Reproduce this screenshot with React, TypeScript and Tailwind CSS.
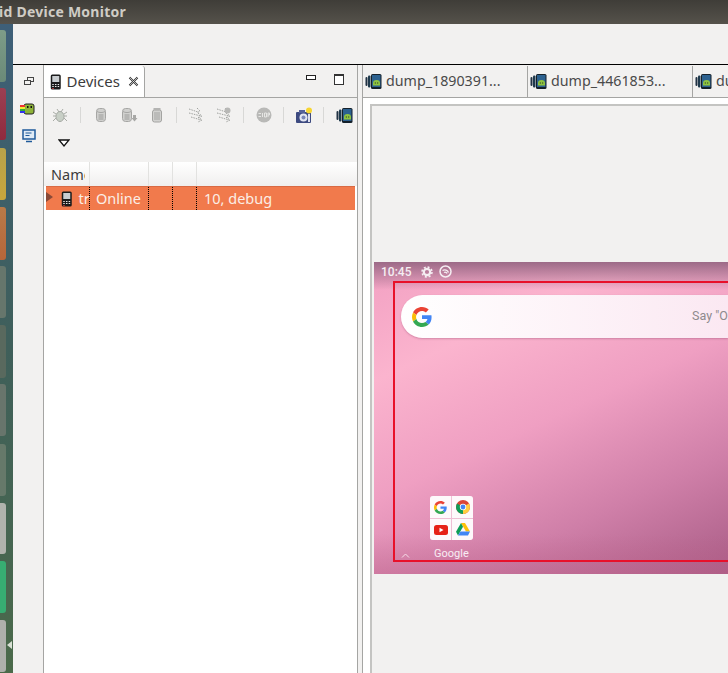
const ui = { fontFamily: '"Noto Sans", "Open Sans", sans-serif' };

function Phone({ size = 16 }: { size?: number }) {
  return (
    <svg width={size * 0.72} height={size} viewBox="0 0 11 16" className="shrink-0">
      <rect x="0.5" y="0.5" width="10" height="15" rx="1.5" fill="#1b1b1b" />
      <rect x="2" y="2" width="7" height="6" fill="#c9cdd0" />
      <g fill="#e8e8e8">
        <rect x="2" y="10" width="1.5" height="1" /><rect x="4.7" y="10" width="1.5" height="1" /><rect x="7.4" y="10" width="1.5" height="1" />
        <rect x="2" y="12" width="1.5" height="1" /><rect x="4.7" y="12" width="1.5" height="1" /><rect x="7.4" y="12" width="1.5" height="1" />
      </g>
      <g fill="#d43c3c"><rect x="2" y="14" width="1.5" height="1" /></g>
    </svg>
  );
}

function DumpIcon() {
  return (
    <svg width="17" height="17" viewBox="0 0 17 17" className="shrink-0">
      <rect x="0.5" y="4" width="2" height="9" rx="1" fill="#234" />
      <rect x="3" y="2.5" width="2.5" height="12" rx="1" fill="#1f3a4d" />
      <rect x="6" y="1" width="10.5" height="15" rx="1.5" fill="#14202a" />
      <rect x="7" y="2" width="8.5" height="12" fill="#2c618f" />
      <path d="M8 12.5v-2.5a3.5 3 0 0 1 7 0v2.5z" fill="#8fc43f" />
      <rect x="9.8" y="9.5" width="1" height="1" fill="#14202a" />
      <rect x="12.2" y="9.5" width="1" height="1" fill="#14202a" />
    </svg>
  );
}

function Bug() {
  return (
    <svg width="16" height="16" viewBox="0 0 16 16" className="shrink-0">
      <g stroke="#a9aca6" strokeWidth="1" fill="none">
        <path d="M5 2l2 3M11 2L9 5M1 5l3 2M15 5l-3 2M1 9h3M15 9h-3M1 14l3-3M15 14l-3-3" />
      </g>
      <ellipse cx="8" cy="9.5" rx="4" ry="5" fill="#c8cfc6" stroke="#a4a8a2" />
    </svg>
  );
}

function Can({ arrow = false }: { arrow?: boolean }) {
  return (
    <svg width={arrow ? 17 : 12} height="16" viewBox={arrow ? "0 0 17 16" : "0 0 12 16"} className="shrink-0">
      <rect x="1.5" y="1.5" width="9" height="13" rx="3" fill="#d0d0ce" stroke="#a6a6a4" />
      <path d="M2 4.5c2 1.4 6 1.4 8 0" stroke="#a6a6a4" fill="none" />
      <rect x="3.5" y="7" width="5" height="6" fill="#b6b6b4" />
      {arrow && <path d="M12 8h3v3h1.5l-3 3.500-3-3.500H12z" fill="#a8a8a6" />}
    </svg>
  );
}

function Trash() {
  return (
    <svg width="12" height="16" viewBox="0 0 12 16" className="shrink-0">
      <rect x="1.500" y="3" width="9" height="12" rx="2" fill="#d2d2d0" stroke="#a4a4a2" />
      <rect x="2.500" y="1" width="7" height="2" fill="#b4b4b2" />
      <path d="M4 5v8M6 5v8M8 5v8" stroke="#a4a4a2" />
    </svg>
  );
}

function Threads({ blob = false }: { blob?: boolean }) {
  return (
    <svg width="16" height="16" viewBox="0 0 16 16" className="shrink-0">
      <g stroke="#a0a29f" fill="none" strokeDasharray="1.500 1">
        <path d="M1 2l9 3M1 6l12 3M3 10l10 3" />
        <path d="M9 1l3 3-3 2M10 6l4 3-4 2M10 10l4 3-4 2" />
      </g>
      {blob && <circle cx="11.500" cy="3.500" r="3" fill="#b8b8b6" />}
    </svg>
  );
}

function Stop() {
  return (
    <svg width="16" height="16" viewBox="0 0 16 16" className="shrink-0">
      <circle cx="8" cy="8" r="7.500" fill="#b9b9b7" />
      <path d="M2.500 6.500h2.500M2.500 9.500h2.500M6.500 6v4M8.500 6h2v4h-2zM12 10V6h1.500v2H12" stroke="#e6e6e4" fill="none" strokeWidth="1" />
    </svg>
  );
}

function Camera() {
  return (
    <svg width="18" height="17" viewBox="0 0 18 17" className="shrink-0">
      <rect x="1" y="5" width="15" height="11" rx="1" fill="#3d4a80" />
      <rect x="4" y="3" width="6" height="3" fill="#56629a" />
      <circle cx="8.500" cy="10.500" r="4" fill="#e3e6f2" />
      <circle cx="8.500" cy="10.500" r="2" fill="#7a86b8" />
      <rect x="13" y="7" width="2" height="8" fill="#dfe2f0" />
      <circle cx="14" cy="3.500" r="3" fill="#f7d531" />
    </svg>
  );
}

function GoogleG({ size = 20 }: { size?: number }) {
  return (
    <svg width={size} height={size} viewBox="0 0 48 48" className="shrink-0">
      <path fill="#EA4335" d="M24 9.500c3.540 0 6.710 1.220 9.210 3.600l6.850-6.850C35.900 2.380 30.470 0 24 0 14.620 0 6.510 5.380 2.560 13.220l7.980 6.190C12.430 13.720 17.740 9.500 24 9.500z" />
      <path fill="#4285F4" d="M46.980 24.550c0-1.570-.15-3.090-.38-4.550H24v9.020h12.940c-.58 2.960-2.260 5.480-4.780 7.180l7.730 6c4.510-4.180 7.090-10.360 7.090-17.650z" />
      <path fill="#FBBC05" d="M10.530 28.590c-.48-1.450-.76-2.990-.76-4.590s.27-3.140.76-4.590l-7.980-6.190C.92 16.460 0 20.120 0 24c0 3.880.92 7.540 2.560 10.780l7.970-6.190z" />
      <path fill="#34A853" d="M24 48c6.480 0 11.930-2.130 15.890-5.810l-7.730-6c-2.150 1.450-4.920 2.300-8.160 2.300-6.260 0-11.570-4.220-13.470-9.910l-7.980 6.190C6.510 42.620 14.620 48 24 48z" />
    </svg>
  );
}

function Chrome() {
  return (
    <svg width="14" height="14" viewBox="0 0 14 14">
      <circle cx="7" cy="7" r="7" fill="#db4437" />
      <path d="M7 7L1 3.500A7 7 0 0 0 7 14z" fill="#0f9d58" />
      <path d="M7 7v7a7 7 0 0 0 6-10.500z" fill="#ffcd40" />
      <circle cx="7" cy="7" r="3.200" fill="#fff" />
      <circle cx="7" cy="7" r="2.400" fill="#4285f4" />
    </svg>
  );
}

function Youtube() {
  return (
    <svg width="14" height="10" viewBox="0 0 14 10">
      <rect width="14" height="10" rx="2.500" fill="#e62117" />
      <path d="M5.500 2.800L9.500 5l-4 2.200z" fill="#fff" />
    </svg>
  );
}

function Drive() {
  return (
    <svg width="14" height="13" viewBox="0 0 14 13">
      <path d="M5 0h4l5 8.500h-4z" fill="#ffc107" />
      <path d="M5 0l2 3.700-5 8.800-2-3.800z" fill="#0f9d58" />
      <path d="M4.500 8.500H14l-2 4H2z" fill="#4285f4" />
    </svg>
  );
}

const dock = [
  "h-[52px] mt-[6px] bg-gradient-to-b from-[#7d9c88] to-[#6a8a78]",
  "h-[52px] mt-[6px] bg-gradient-to-b from-[#9c3f52] to-[#8f2a3e]",
  "h-[52px] mt-[8px] bg-gradient-to-b from-[#b8a24a] to-[#c7a63c]",
  "h-[53px] mt-[7px] bg-gradient-to-b from-[#b97a48] to-[#b5663a]",
  "h-[52px] mt-[6px] bg-[#66766c]",
  "h-[53px] mt-[7px] bg-[#59695e]",
  "h-[52px] mt-[6px] bg-[#68756c]",
  "h-[52px] mt-[8px] bg-[#66796a]",
  "h-[51px] mt-[7px] bg-[#b0b3ad]",
  "h-[52px] mt-[7px] bg-[#37ad72]",
  "h-[52px] mt-[7px] bg-[#aeb0ab]",
];

function Sep() {
  return <div className="w-px h-[16px] bg-[#d8d8d6] shrink-0" />;
}

export default function App() {
  return (
    <div className="w-[728px] h-[673px] overflow-hidden flex flex-col bg-[#f2f1f0]" style={ui}>
      <div className="h-[24px] shrink-0 bg-gradient-to-b from-[#3f3d38] to-[#55524b] flex items-center overflow-hidden">
        <span className="text-[14px] font-bold text-[#cfccc5] leading-none tracking-[0.25px] ml-[-1px] mt-[-1px]">id Device Monitor</span>
      </div>
      <div className="flex-1 flex min-h-0">
        <div className="relative w-[13px] shrink-0 bg-gradient-to-b from-[#3e5f78] via-[#3f5f5a] to-[#4b6a4a] overflow-hidden">
          {dock.map((c, i) => (
            <div key={i} className={`w-[6px] rounded-r-[3px] ${c}`} />
          ))}
          <div className="absolute right-[1px] bottom-[24px] w-0 h-0 border-y-[4px] border-y-transparent border-r-[5px] border-r-[#d9e0d4]" />
        </div>
        <div className="flex-1 flex flex-col min-w-0">
          <div className="h-[41px] shrink-0 border-b border-black bg-[#f2f1f0]" />
          <div className="flex-1 flex min-h-0">
            {/* perspective bar */}
            <div className="w-[30px] shrink-0 flex flex-col items-center pt-[11px]">
              <svg width="10" height="10" viewBox="0 0 10 10" className="ml-[1px]">
                <rect x="3.500" y="1.500" width="6" height="4" fill="none" stroke="#444" />
                <rect x="0.500" y="4.500" width="6" height="4" fill="#f2f1f0" stroke="#444" />
              </svg>
              <svg width="16" height="12" viewBox="0 0 16 12" className="mt-[17px]">
                <rect x="4" y="1" width="10" height="10" rx="2" fill="#8fb339" stroke="#222" />
                <rect x="0" y="2" width="5" height="2" fill="#e33" /><rect x="0" y="4" width="5" height="2" fill="#ee3" />
                <rect x="0" y="6" width="5" height="2" fill="#3a3" /><rect x="0" y="8" width="5" height="2" fill="#33e" />
                <rect x="7" y="3" width="1.500" height="2" fill="#111" /><rect x="10.500" y="3" width="1.500" height="2" fill="#111" />
              </svg>
              <svg width="14" height="14" viewBox="0 0 14 14" className="mt-[14px] ml-px">
                <rect x="1" y="1" width="12" height="9" fill="#dfeaf5" stroke="#1f5a9a" strokeWidth="1.500" />
                <path d="M3.500 4h6M3.500 6.500h4" stroke="#1f5a9a" />
                <path d="M4 12.500h6" stroke="#1f5a9a" strokeWidth="1.500" />
              </svg>
            </div>
            {/* Devices view */}
            <div className="w-[315px] shrink-0 border-l border-r border-[#a5a5a3] flex flex-col">
              <div className="h-[32px] shrink-0 flex border-b border-[#a5a5a3] mt-px">
                <div className="w-[101px] h-[31px] bg-white rounded-tr-[3px] border-r border-[#a5a5a3] flex items-center pl-[6px] text-[15px] text-[#3c3c3c]">
                  <Phone />
                  <span className="ml-[5px] leading-none">Devices</span>
                  <svg width="11" height="11" viewBox="0 0 11 11" className="ml-[8px]">
                    <path d="M1.500 1.500l8 8M9.500 1.500l-8 8" stroke="#333" strokeWidth="2" />
                    <path d="M1.500 1.500l8 8M9.500 1.500l-8 8" stroke="#eee" strokeWidth="0.700" />
                  </svg>
                </div>
                <div className="flex-1 flex items-start justify-end pt-[8px] pr-[13px]">
                  <div className="w-[10px] h-[5px] border border-[#222] bg-white mr-[18px] mt-[1px]" />
                  <div className="w-[10px] h-[11px] border border-[#333] border-t-2 bg-white" />
                </div>
              </div>
              <div className="h-[64px] shrink-0 flex flex-col">
                <div className="h-[34px] flex items-center pl-[8px]">
                  <Bug />
                  <div className="w-[12px]" /><Sep /><div className="w-[14px]" />
                  <Can />
                  <div className="w-[14px]" />
                  <Can arrow />
                  <div className="w-[13px]" />
                  <Trash />
                  <div className="w-[13px]" /><Sep /><div className="w-[11px]" />
                  <Threads />
                  <div className="w-[12px]" />
                  <Threads blob />
                  <div className="w-[11px]" /><Sep /><div className="w-[12px]" />
                  <Stop />
                  <div className="w-[11px]" /><Sep /><div className="w-[11px]" />
                  <Camera />
                  <div className="w-[10px]" /><Sep /><div className="w-[12px]" />
                  <DumpIcon />
                </div>
                <div className="pl-[14px] mt-[7px]">
                  <svg width="12" height="8" viewBox="0 0 12 8">
                    <path d="M1 1h10L6 7z" fill="#fff" stroke="#111" strokeWidth="1.300" />
                  </svg>
                </div>
              </div>
              <div className="flex-1 bg-white">
                <div className="h-[24px] flex bg-gradient-to-b from-white to-[#f0efee] text-[14.500px] text-[#3c3c3c] pl-px">
                  <div className="w-[45px] border-r border-[#e2e2e0] pl-[6px] flex items-center leading-none">
                    <span className="w-[34px] overflow-hidden">Name</span>
                  </div>
                  <div className="w-[59px] border-r border-[#e2e2e0]" />
                  <div className="w-[24px] border-r border-[#e2e2e0]" />
                  <div className="w-[24px] border-r border-[#e2e2e0]" />
                </div>
                <div className="h-[24px] w-[309px] ml-[2px] bg-[#f17a4c] border-t border-[#d96a43] flex text-[14.500px] text-[#fbeee6]">
                  <div className="w-[44px] border-r border-dotted border-black flex items-center overflow-hidden">
                    <svg width="7" height="10" viewBox="0 0 7 10" className="shrink-0 mt-[-3px]">
                      <path d="M0 0l7 5-7 5z" fill="#8a4a38" />
                    </svg>
                    <span className="ml-[8px] shrink-0"><Phone /></span>
                    <span className="ml-[6px] leading-none">tr</span>
                  </div>
                  <div className="w-[59px] border-r border-dotted border-black flex items-center pl-[6px] leading-none">Online</div>
                  <div className="w-[24px] border-r border-dotted border-black" />
                  <div className="w-[24px] border-r border-dotted border-black" />
                  <div className="flex-1 flex items-center pl-[7px] leading-none">10, debug</div>
                </div>
              </div>
            </div>
            {/* sash */}
            <div className="w-[4px] shrink-0 bg-[#f2f1f0]" />
            {/* editor */}
            <div className="flex-1 min-w-0 border-l border-[#a5a5a3] flex flex-col overflow-hidden">
              <div className="h-[32px] shrink-0 flex border-b border-[#a5a5a3] mt-px text-[14.250px] text-[#4a4a4a] whitespace-nowrap">
                <div className="w-[165px] shrink-0 border-r border-[#a5a5a3] flex items-center pl-[2px] gap-[4px] leading-none"><DumpIcon /><span>dump_1890391...</span></div>
                <div className="w-[165px] shrink-0 border-r border-[#a5a5a3] flex items-center pl-[2px] gap-[4px] leading-none"><DumpIcon /><span>dump_4461853...</span></div>
                <div className="flex-1 flex items-center pl-[2px] gap-[4px] leading-none overflow-hidden"><DumpIcon /><span>dump_3</span></div>
              </div>
              <div className="flex-1 bg-white pt-[6px] pl-[7px]">
                <div className="h-full border-t-2 border-l-2 border-[#c4c4c2] bg-[#f2f1f0] pl-[2px] pt-[156px]">
                  <div className="relative h-[312px] w-[354px] bg-[linear-gradient(155deg,#f2a0c2_0%,#fbb4ce_25%,#ef9fc2_50%,#cf7fa8_75%,#a95d86_100%)] overflow-hidden">
                    <div className="absolute inset-x-0 top-0 h-[28px] bg-gradient-to-b from-[#9c6a87] to-transparent" />
                    <div className="absolute inset-x-0 bottom-0 h-[40px] bg-gradient-to-t from-[#bb5f8766] to-transparent" />
                    <div className="relative flex items-center h-[19px] pl-[7px] text-[12px] font-medium text-[#f5eef2] leading-none" style={{ fontFamily: "Roboto, sans-serif" }}>
                      <span>10:45</span>
                      <svg width="12" height="12" viewBox="0 0 12 12" className="ml-[10px]">
                        <circle cx="6" cy="6" r="3.200" fill="none" stroke="#f5eef2" strokeWidth="2.200" />
                        <circle cx="6" cy="6" r="5" fill="none" stroke="#f5eef2" strokeWidth="1.500" strokeDasharray="2 1.930" />
                      </svg>
                      <svg width="13" height="13" viewBox="0 0 13 13" className="ml-[6px]">
                        <circle cx="6.500" cy="6.500" r="5.500" fill="none" stroke="#f5eef2" strokeWidth="1.500" />
                        <path d="M3.500 5.500a4 4 0 0 1 6 2M5 7.500a2 2 0 0 1 3 1" fill="none" stroke="#f5eef2" strokeWidth="1.300" />
                      </svg>
                    </div>
                    <div className="relative ml-[27px] mt-[14px] h-[43px] bg-gradient-to-r from-white to-[#fbe8f2] rounded-l-[22px] shadow-[0_1px_2px_rgba(120,40,80,0.3)] flex items-center pl-[11px]">
                      <GoogleG />
                      <span className="ml-auto mr-[-11px] w-[47px] overflow-hidden whitespace-nowrap text-[12.500px] text-[#8f8a8d]" style={{ fontFamily: "Roboto, sans-serif" }}>Say "Ok Google"</span>
                    </div>
                    <div className="relative ml-[56px] mt-[158px] w-[43px] h-[44px] bg-[#fdeef4]/50 rounded-[3px] grid grid-cols-2 gap-px">
                      <div className="bg-white/90 flex items-center justify-center rounded-tl-[3px]"><GoogleG size={13} /></div>
                      <div className="bg-white/90 flex items-center justify-center rounded-tr-[3px]"><Chrome /></div>
                      <div className="bg-white/90 flex items-center justify-center rounded-bl-[3px]"><Youtube /></div>
                      <div className="bg-white/90 flex items-center justify-center rounded-br-[3px]"><Drive /></div>
                    </div>
                    <div className="relative h-[22px] flex items-start">
                      <svg width="9" height="5" viewBox="0 0 9 5" className="ml-[27px] mt-[13px]">
                        <path d="M1 4.500l3.500-3.500L8 4.500" fill="none" stroke="#f6dfe9" />
                      </svg>
                      <span className="ml-[24px] mt-[8px] text-[11px] text-[#f8edf3] leading-none" style={{ fontFamily: "Roboto, sans-serif" }}>Google</span>
                    </div>
                    <div className="absolute left-[19px] top-[19px] w-[340px] h-[281px] border-2 border-[#e8102a]" />
                  </div>
                </div>
              </div>
            </div>
          </div>
        </div>
      </div>
    </div>
  );
}
